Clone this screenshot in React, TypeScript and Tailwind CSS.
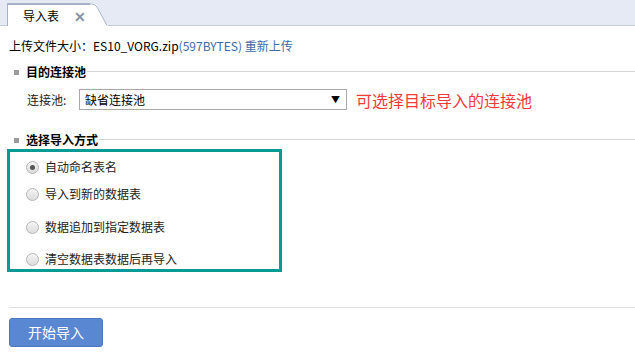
import React from 'react'

const font = { fontFamily: '"Noto Sans CJK SC", "Liberation Sans", sans-serif' }

function Section({ title }: { title: string }) {
  return (
    <div className="flex items-center h-[16px]">
      <span className="w-[5px] h-[5px] bg-[#9a9a9a] ml-[14px] mr-[7px]" />
      <span className="font-bold text-[12px] text-black">{title}</span>
      <span className="flex-1 h-px bg-[#d4d4d4] ml-[1px] -mt-[2px]" />
    </div>
  )
}

function Radio({ label, checked }: { label: string; checked?: boolean }) {
  return (
    <label className="flex items-center gap-[6px] text-[12px] text-[#222]">
      <span className="w-[13px] h-[13px] rounded-full border border-[#b5b5b5] bg-gradient-to-b from-[#f4f4f4] to-[#dcdcdc] flex items-center justify-center">
        {checked && <span className="w-[5px] h-[5px] rounded-full bg-[#555]" />}
      </span>
      {label}
    </label>
  )
}

export default function App() {
  return (
    <div className="w-[635px] h-[352px] bg-white overflow-hidden" style={font}>
      {/* tab bar */}
      <div className="h-[26px] bg-[#e6eaf4] border-b border-[#c6cad2] flex items-end pl-[7px]">
        <div className="relative flex items-end -mb-px">
          <div className="h-[23px] w-[83px] bg-white border-t-2 border-l border-[#a7b2c8] flex items-center pl-[15px] gap-[15px]">
            <span className="text-[12px] text-black">导入表</span>
            <span className="text-[14px] font-bold text-[#8793ad] leading-none">✕</span>
          </div>
          <svg width="18" height="23" viewBox="0 0 18 23" className="block">
            <path d="M0 0 L2 0 Q5 0 7 3 L17 22 L18 23 L0 23 Z" fill="white" />
            <path d="M0 1 L2 1 Q5 1 7 4 L17 22.5" fill="none" stroke="#a7b2c8" strokeWidth="1" />
          </svg>
        </div>
      </div>

      {/* file line */}
      <div className="mt-[12px] pl-[9px] text-[12px] text-black h-[16px] flex items-center">
        上传文件大小：ES10_VORG.zip<span className="text-[#3a6ba8]">(597BYTES) 重新上传</span>
      </div>

      <div className="mt-[10px]">
        <Section title="目的连接池" />
      </div>

      <div className="mt-[9px] flex items-center h-[21px]">
        <span className="pl-[27px] w-[79px] text-[12px] text-[#222]">连接池:</span>
        <div className="w-[268px] h-[21px] border border-[#a9a9a9] flex items-center justify-between pl-[5px] pr-[6px] text-[12px] text-black">
          <span>缺省连接池</span>
          <span className="text-[9px] leading-none">▼</span>
        </div>
        <span className="ml-[9px] text-[16px] text-[#f03a3a]">可选择目标导入的连接池</span>
      </div>

      <div className="mt-[22px]">
        <Section title="选择导入方式" />
      </div>

      <div className="ml-[7px] mt-[1px] w-[275px] h-[123px] border-[3px] border-[#079b95] pl-[16px] pt-[6px] flex flex-col">
        <div className="h-[18px] flex items-center"><Radio label="自动命名表名" checked /></div>
        <div className="h-[18px] mt-[9px] flex items-center"><Radio label="导入到新的数据表" /></div>
        <div className="h-[18px] mt-[15px] flex items-center"><Radio label="数据追加到指定数据表" /></div>
        <div className="h-[18px] mt-[14px] flex items-center"><Radio label="清空数据表数据后再导入" /></div>
      </div>

      <div className="ml-[9px] mt-[35px] h-px bg-[#e0e0e0]" />

      <div className="pl-[9px] mt-[10px]">
        <button className="w-[94px] h-[29px] rounded-[3px] bg-[#5a87d2] border border-[#4b77c0] text-white text-[14px]">
          开始导入
        </button>
      </div>
    </div>
  )
}
